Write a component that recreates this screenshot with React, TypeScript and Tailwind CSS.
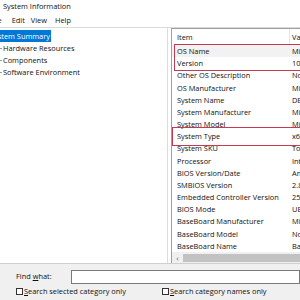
const rows: [string, string][] = [
  ["OS Name", "Microsoft"],
  ["Version", "10.0"],
  ["Other OS Description", "Not"],
  ["OS Manufacturer", "Microsoft"],
  ["System Name", "DESKTOP"],
  ["System Manufacturer", "Micro"],
  ["System Model", "Micro"],
  ["System Type", "x64"],
  ["System SKU", "To be"],
  ["Processor", "Intel"],
  ["BIOS Version/Date", "American"],
  ["SMBIOS Version", "2.8"],
  ["Embedded Controller Version", "255"],
  ["BIOS Mode", "UEFI"],
  ["BaseBoard Manufacturer", "Micro"],
  ["BaseBoard Model", "Not"],
  ["BaseBoard Name", "Base"],
];

function Row({ item, value, shaded }: { item: string; value: string; shaded?: boolean }) {
  return (
    <div className={`flex h-[12.25px] items-center pt-[1px] ${shaded ? "bg-[#f2f2f2]" : ""}`}>
      <div className="w-[118px] shrink-0 pl-[5px] whitespace-nowrap">{item}</div>
      <div className="pl-[2px] whitespace-nowrap">{value}</div>
    </div>
  );
}

function Check({ label }: { label: string }) {
  return (
    <div className="flex items-center gap-[1px]">
      <span className="h-[7px] w-[7px] border border-[#333] bg-white" />
      <span>
        <span className="underline">{label[0]}</span>
        {label.slice(1)}
      </span>
    </div>
  );
}

export default function App() {
  return (
    <div
      className="h-[300px] w-[300px] overflow-hidden bg-white text-[7.4px] leading-none text-[#111]"
      style={{ fontFamily: '"Open Sans", "Noto Sans", sans-serif' }}
    >
      <div className="flex h-[14px] items-center pl-[3px]">System Information</div>
      <div className="flex h-[14px] items-center border-b border-[#dadada]">
        <span className="ml-[-10px]">File</span>
        <span className="ml-[10px]">Edit</span>
        <span className="ml-[6px]">View</span>
        <span className="ml-[8px]">Help</span>
      </div>

      <div className="flex h-[236px] border-b border-[#cfcfcf]">
        <div className="w-[168px] shrink-0 border-r border-[#dcdcdc] pt-[2px]">
          <div className="flex">
            <div className="ml-[-10px] flex h-[12px] items-center bg-[#0078d7] pr-[1px] pt-[1px] text-white">
              <span className="whitespace-nowrap">System Summary</span>
            </div>
          </div>
          {["Hardware Resources", "Components", "Software Environment"].map((t) => (
            <div key={t} className="flex h-[12px] items-center pt-[1px]">
              <span className="h-px w-[2px] bg-[#999]" />
              <span className="ml-[1px]">{t}</span>
            </div>
          ))}
        </div>

        <div className="ml-[3px] flex flex-1 flex-col overflow-hidden border-l border-t border-[#a0a0a0]">
          <div className="flex h-[16px] shrink-0 items-center">
            <div className="flex h-full w-[118px] shrink-0 items-center border-r border-[#e5e5e5] pl-[5px] pt-[1px]">Item</div>
            <div className="pl-[2px] pt-[1px]">Value</div>
          </div>
          <div className="relative">
            <Row item={rows[0][0]} value={rows[0][1]} shaded />
            <Row item={rows[1][0]} value={rows[1][1]} />
            <span className="pointer-events-none absolute inset-y-[-1px] left-[2px] right-[-20px] border-[1.5px] border-[#c43a52]" />
          </div>
          {rows.slice(2, 7).map(([a, b]) => (
            <Row key={a} item={a} value={b} />
          ))}
          <div className="relative">
            <Row item={rows[7][0]} value={rows[7][1]} />
            <span className="pointer-events-none absolute inset-y-[-3px] left-[0px] right-[-20px] border-[1.5px] border-[#c43a52]" />
          </div>
          {rows.slice(8).map(([a, b]) => (
            <Row key={a} item={a} value={b} />
          ))}
          <div className="mt-auto flex h-[11px] shrink-0 items-center bg-[#f0f0f0]">
            <span className="w-[11px] text-center text-[8px] text-[#555]">‹</span>
            <div className="h-[8px] flex-1 bg-[#c2c2c2]" />
          </div>
        </div>
      </div>

      <div className="h-[36px] bg-[#f0f0f0] pl-[16px] pt-[6px]">
        <div className="flex h-[14px] items-center">
          <span className="w-[55px]">
            Find <span className="underline">w</span>hat:
          </span>
          <div className="h-[14px] flex-1 border border-[#7a7a7a] bg-white" />
        </div>
        <div className="mt-[4px] flex items-center">
          <div className="w-[146px]">
            <Check label="Search selected category only" />
          </div>
          <Check label="Search category names only" />
        </div>
      </div>
    </div>
  );
}
